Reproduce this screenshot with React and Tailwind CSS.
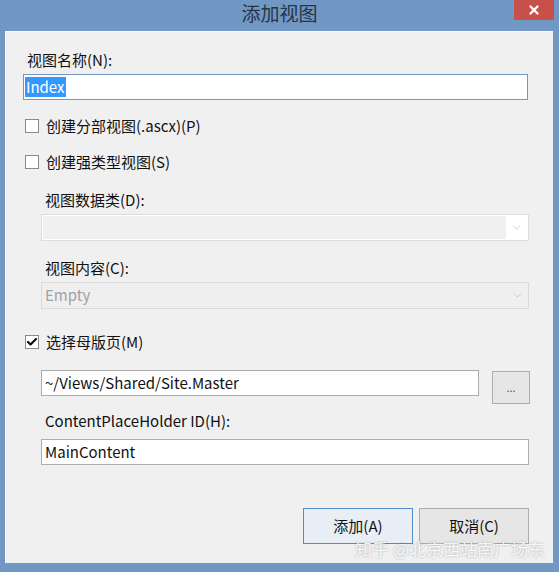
import { Check, ChevronDown, X } from 'lucide-react';

const font = { fontFamily: '"Noto Sans CJK SC", "Noto Sans", sans-serif' };

// 复选框行
const CheckRow = ({ checked, label, className = "" }) => (
    <div className={`flex items-center h-5 ml-[19px] ${className}`}>
        <div className="flex justify-center items-center w-[14px] h-[14px] bg-white border border-[#8a8a8a]">
            {checked && <Check size={12} strokeWidth={4.5} className="text-[#111]" />}
        </div>
        <span className="ml-[7px] text-[15px] leading-5 text-[#111]">{label}</span>
    </div>
);

// 禁用的下拉框
const DisabledSelect = ({ value, className = "" }) => (
    <div className={`flex items-center h-[27px] ml-[35px] w-[488px] border border-[#dadada] bg-[#efefef] ${className}`}>
        <span className="flex-1 pl-[3px] text-[15px] text-[#a2a2a2]">{value}</span>
        <div className="flex justify-center items-center w-[22px] h-full">
            <ChevronDown size={13} strokeWidth={1.2} className="text-[#b5b5b5]" />
        </div>
    </div>
);

export default function App() {
    return (
        <div className="flex flex-col w-[559px] h-[572px] bg-[#7197c5] overflow-hidden" style={font}>
            {/* 标题栏 */}
            <div className="relative flex justify-center items-center h-[31px] shrink-0">
                <span className="text-[19px] text-[#253545] -mt-[5px]">添加视图</span>
                <div className="absolute top-0 right-[5px] flex justify-center items-center w-[40px] h-[20px] bg-[#c8504b]">
                    <X size={14} strokeWidth={4} className="text-white" />
                </div>
            </div>

            {/* 内容区域 */}
            <div className="relative flex flex-col ml-[5px] w-[548px] h-[532px] bg-[#f0f0f0] border-l border-t border-[#fafafa]">
                <div className="mt-[18px] ml-[21px] text-[15px] leading-5 text-[#111]">视图名称(N):</div>
                <div className="flex items-center mt-[4px] ml-[17px] w-[505px] h-[26px] bg-white border border-[#6f98c4] pl-[1px]">
                    <span className="px-[1px] bg-[#3399ff] text-white text-[15px] leading-5">Index</span>
                </div>

                <CheckRow label="创建分部视图(.ascx)(P)" className="mt-[16px]" />
                <CheckRow label="创建强类型视图(S)" className="mt-[16px]" />

                <div className="mt-[18px] ml-[39px] text-[15px] leading-5 text-[#111]">视图数据类(D):</div>
                <div className="flex items-stretch mt-[4px] ml-[35px] w-[488px] h-[27px] border border-[#dcdcdc] bg-white p-[1px]">
                    <div className="flex-1 bg-[#f0f0f0]"></div>
                    <div className="flex justify-center items-center w-[21px]">
                        <ChevronDown size={13} strokeWidth={1.2} className="text-[#b5b5b5]" />
                    </div>
                </div>

                <div className="mt-[17px] ml-[39px] text-[15px] leading-5 text-[#111]">视图内容(C):</div>
                <DisabledSelect value="Empty" className="mt-[4px]" />

                <CheckRow checked label="选择母版页(M)" className="mt-[23px]" />

                <div className="flex items-start mt-[18px] ml-[35px]">
                    <div className="flex items-center w-[438px] h-[26px] bg-white border border-[#acacac] pl-[3px] text-[15px] text-[#111]">
                        ~/Views/Shared/Site.Master
                    </div>
                    <div className="flex justify-center items-center ml-[13px] mt-[1px] w-[38px] h-[33px] bg-[#e6e6e6] border border-[#adadad] text-[11px] text-[#555]">
                        ...
                    </div>
                </div>

                <div className="mt-[7px] ml-[39px] text-[15px] leading-5 text-[#111]">ContentPlaceHolder ID(H):</div>
                <div className="flex items-center mt-[8px] ml-[35px] w-[488px] h-[26px] bg-white border border-[#acacac] pl-[3px] text-[15px] text-[#111]">
                    MainContent
                </div>

                {/* 按钮 */}
                <div className="flex justify-end gap-[6px] mt-[43px] mr-[24px]">
                    <div className="flex justify-center items-center w-[110px] h-[36px] bg-[#e7eef5] border border-[#4f8fc9] text-[15px] text-[#111]">
                        添加(A)
                    </div>
                    <div className="flex justify-center items-center w-[110px] h-[36px] bg-[#e6e6e6] border border-[#adadad] text-[15px] text-[#111]">
                        取消(C)
                    </div>
                </div>

                {/* 水印 */}
                <div className="absolute right-[8px] bottom-[2px] text-[17px] text-white/90 [text-shadow:0_0_2px_rgba(0,0,0,0.35)]">
                    知乎 @北京西站南广场东
                </div>
            </div>
        </div>
    );
}
